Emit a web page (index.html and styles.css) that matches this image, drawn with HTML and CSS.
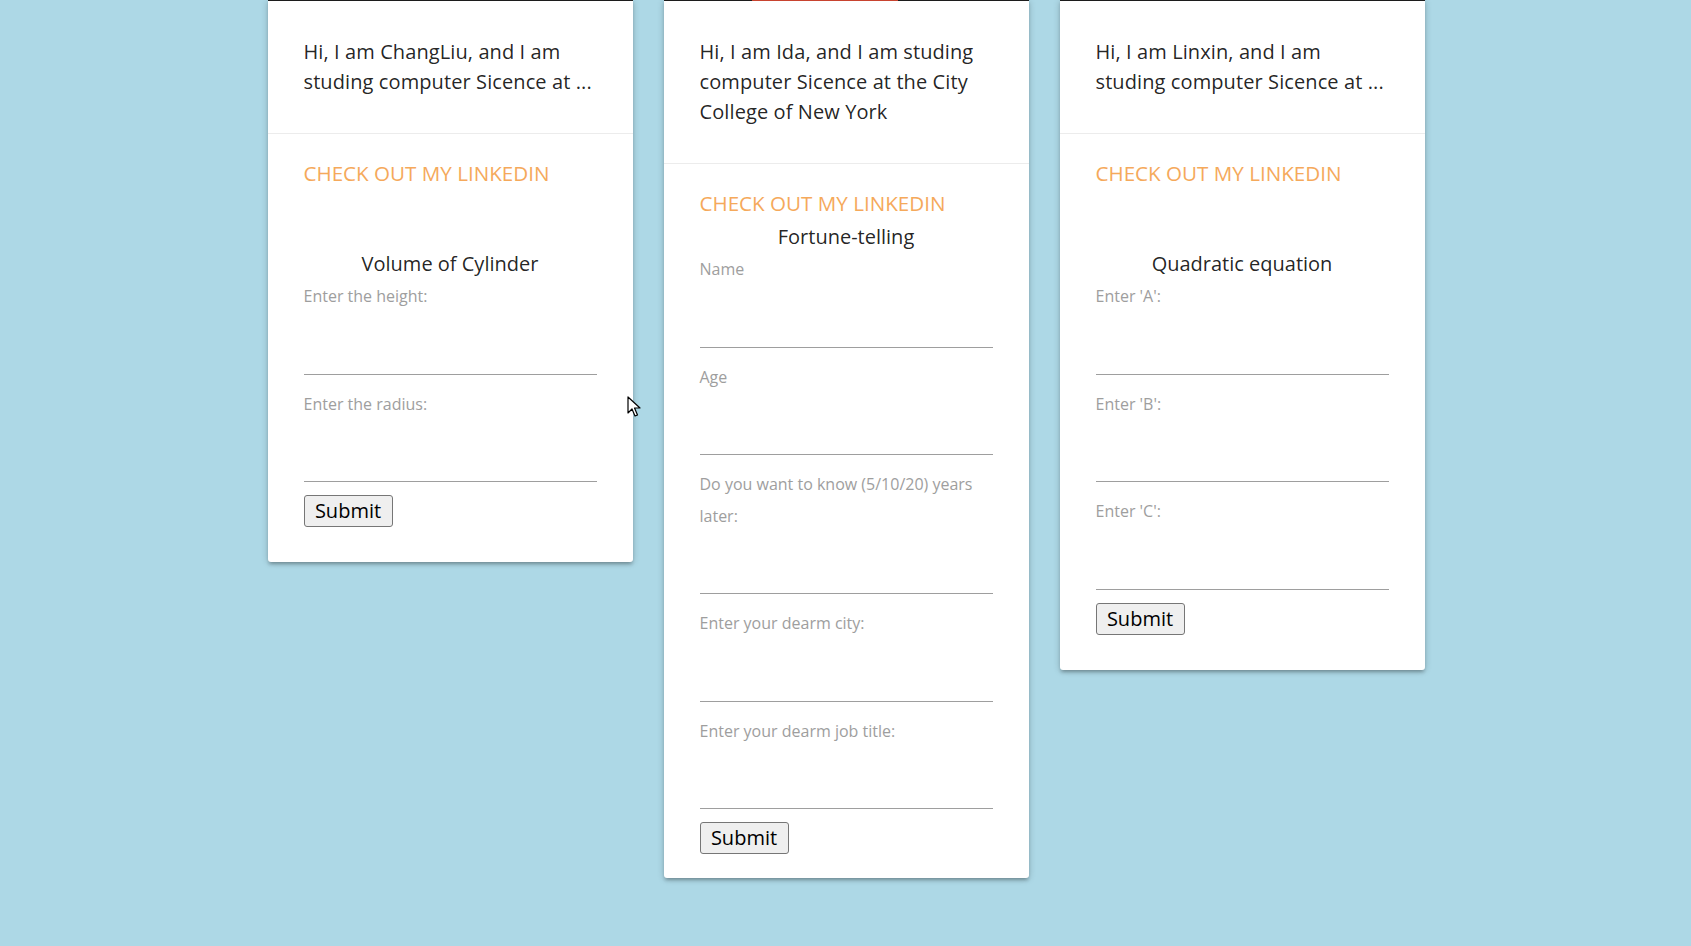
FILE: index.html
```html
<!DOCTYPE html>
<html lang="en">
<head>
<meta charset="utf-8">
<title>Cards</title>
<link rel="stylesheet" href="styles.css">
</head>
<body>
<main class="cards">
  <article class="card">
    <div class="card-image"></div>
    <div class="card-content">
      <p>Hi, I am ChangLiu, and I am studing computer Sicence at ...</p>
    </div>
    <div class="card-action">
      <a class="link" href="#">Check out my LinkedIn</a>
      <form class="calc calc--spaced">
        <h3 class="calc-title">Volume of Cylinder</h3>
        <div class="field"><label>Enter the height:</label><input type="text"></div>
        <div class="field"><label>Enter the radius:</label><input type="text"></div>
        <button type="button" class="btn">Submit</button>
      </form>
    </div>
  </article>

  <article class="card">
    <div class="card-image card-image--red"></div>
    <div class="card-content">
      <p>Hi, I am Ida, and I am studing computer Sicence at the City College of New York</p>
    </div>
    <div class="card-action card-action--compact">
      <a class="link" href="#">Check out my LinkedIn</a>
      <form class="calc">
        <h3 class="calc-title">Fortune-telling</h3>
        <div class="field"><label>Name</label><input type="text"></div>
        <div class="field"><label>Age</label><input type="text"></div>
        <div class="field"><label>Do you want to know (5/10/20) years later:</label><input type="text"></div>
        <div class="field"><label>Enter your dearm city:</label><input type="text"></div>
        <div class="field"><label>Enter your dearm job title:</label><input type="text"></div>
        <button type="button" class="btn">Submit</button>
      </form>
    </div>
  </article>

  <article class="card">
    <div class="card-image"></div>
    <div class="card-content">
      <p>Hi, I am Linxin, and I am studing computer Sicence at ...</p>
    </div>
    <div class="card-action">
      <a class="link" href="#">Check out my LinkedIn</a>
      <form class="calc calc--spaced">
        <h3 class="calc-title">Quadratic equation</h3>
        <div class="field"><label>Enter 'A':</label><input type="text"></div>
        <div class="field"><label>Enter 'B':</label><input type="text"></div>
        <div class="field"><label>Enter 'C':</label><input type="text"></div>
        <button type="button" class="btn">Submit</button>
      </form>
    </div>
  </article>
</main>
<svg class="cursor" width="14" height="22" viewBox="0 0 14 22" aria-hidden="true">
  <path d="M1 1 L1 17 L5 13 L8 20 L10.5 19 L7.5 12 L13 12 Z" fill="#fff" stroke="#000" stroke-width="1.2" stroke-linejoin="round"/>
</svg>
</body>
</html>
```

FILE: styles.css
```css
html, body {
  margin: 0;
  padding: 0;
}

body {
  background: #add8e6;
  font-family: "Open Sans", "Noto Sans", sans-serif;
  color: rgba(0, 0, 0, 0.87);
  min-height: 946px;
  position: relative;
}

.cards {
  display: flex;
  justify-content: center;
  align-items: flex-start;
  gap: 31px;
  padding-left: 1px;
}

.card {
  width: 365px;
  background: #fff;
  border-radius: 0 0 3px 3px;
  box-shadow: 0 3px 3px 0 rgba(0, 0, 0, 0.14), 0 4px 2px -3px rgba(0, 0, 0, 0.12), 0 1px 7px 0 rgba(0, 0, 0, 0.2);
}

.card-image {
  height: 1px;
  background: #1c1c1c;
}

.card-image--red {
  background: linear-gradient(90deg, #1c1c1c 0 24%, #c8432f 24% 64%, #1c1c1c 64%);
}

.card-content {
  padding: 36px 36px 36px;
}

.card-content p {
  margin: 0;
  font-size: 20px;
  line-height: 30px;
  letter-spacing: 0.1px;
}

.card-action {
  border-top: 1px solid rgba(160, 160, 160, 0.2);
  padding: 24px 36px 35px;
}

.card-action--compact {
  padding-bottom: 24px;
}

.link {
  display: block;
  color: #f5a95b;
  text-decoration: none;
  text-transform: uppercase;
  font-size: 20.6px;
  line-height: 30px;
}

.calc {
  display: flex;
  flex-direction: column;
}

.calc-title {
  margin: 4px 0 2px;
  text-align: center;
  font-size: 20px;
  line-height: 30px;
  font-weight: 400;
  color: rgba(0, 0, 0, 0.87);
}

.calc--spaced .calc-title {
  margin: 61px 0 2px;
}

.field {
  display: flex;
  flex-direction: column;
  margin-bottom: 14px;
}

.field label {
  font-size: 16px;
  line-height: 31.5px;
  color: #9e9e9e;
}

.field input {
  box-sizing: border-box;
  width: 100%;
  height: 62px;
  border: none;
  border-bottom: 1px solid #9e9e9e;
  outline: none;
  background: transparent;
  padding: 0;
  font: inherit;
}

.btn {
  align-self: flex-start;
  margin-top: -1px;
  width: 89px;
  height: 32px;
  padding: 0;
  font-family: "Open Sans", "Noto Sans", sans-serif;
  font-size: 20px;
  line-height: 1;
  color: #000;
  background: #efefef;
  border: 1px solid #767676;
  border-radius: 3px;
}

.cursor {
  position: absolute;
  left: 627px;
  top: 396px;
}
```
